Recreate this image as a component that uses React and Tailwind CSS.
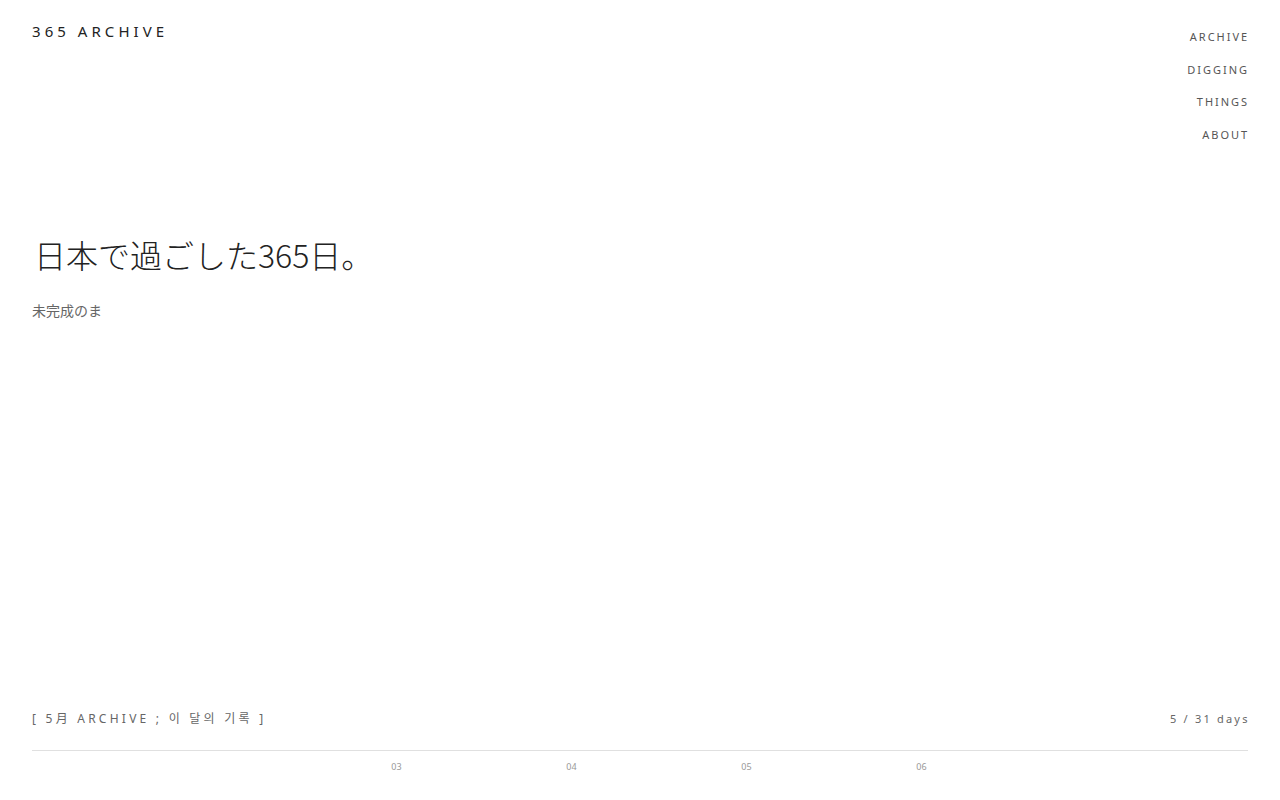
export default function App() {
  const font = { fontFamily: '"Noto Sans", "Noto Sans CJK JP", "Noto Sans CJK KR", sans-serif' };
  const days = ["03", "04", "05", "06"];
  return (
    <div className="w-[1280px] h-[800px] bg-white flex flex-col px-8 overflow-hidden" style={font}>
      <header className="flex justify-between items-start pt-[20px]">
        <div className="text-[15px] tracking-[0.27em] text-[#222] leading-[22px]">365 ARCHIVE</div>
        <nav className="flex flex-col items-end gap-[14.5px] pt-[8px]">
          {["ARCHIVE", "DIGGING", "THINGS", "ABOUT"].map((n) => (
            <a key={n} className="text-[11px] tracking-[0.18em] mr-[-0.1em] text-[#555] leading-[18px]">{n}</a>
          ))}
        </nav>
      </header>
      <main className="pt-[89px]">
        <h1 className="text-[32px] font-light text-[#222] leading-[42px] pl-[2px]" style={{ fontFamily: '"Noto Sans CJK JP", sans-serif' }}>日本で過ごした365日。</h1>
        <p className="text-[14px] text-[#666] mt-[26px] leading-[20px]">未完成のま</p>
      </main>
      <div className="flex-1" />
      <div className="flex justify-between items-center pb-[22px]">
        <div className="text-[12px] tracking-[0.27em] text-[#666] leading-[18px]">[ 5月 ARCHIVE ; 이 달의 기록 ]</div>
        <div className="text-[11px] tracking-[0.2em] mr-[-0.15em] text-[#666] leading-[18px]">5 / 31 days</div>
      </div>
      <div className="border-t border-[#e0e0e0] h-[50px] flex pl-[277px]">
        {days.map((d) => (
          <div key={d} className="w-[175px] text-center text-[9px] text-[#999] pt-[9px] leading-[14px]">{d}</div>
        ))}
      </div>
    </div>
  );
}
